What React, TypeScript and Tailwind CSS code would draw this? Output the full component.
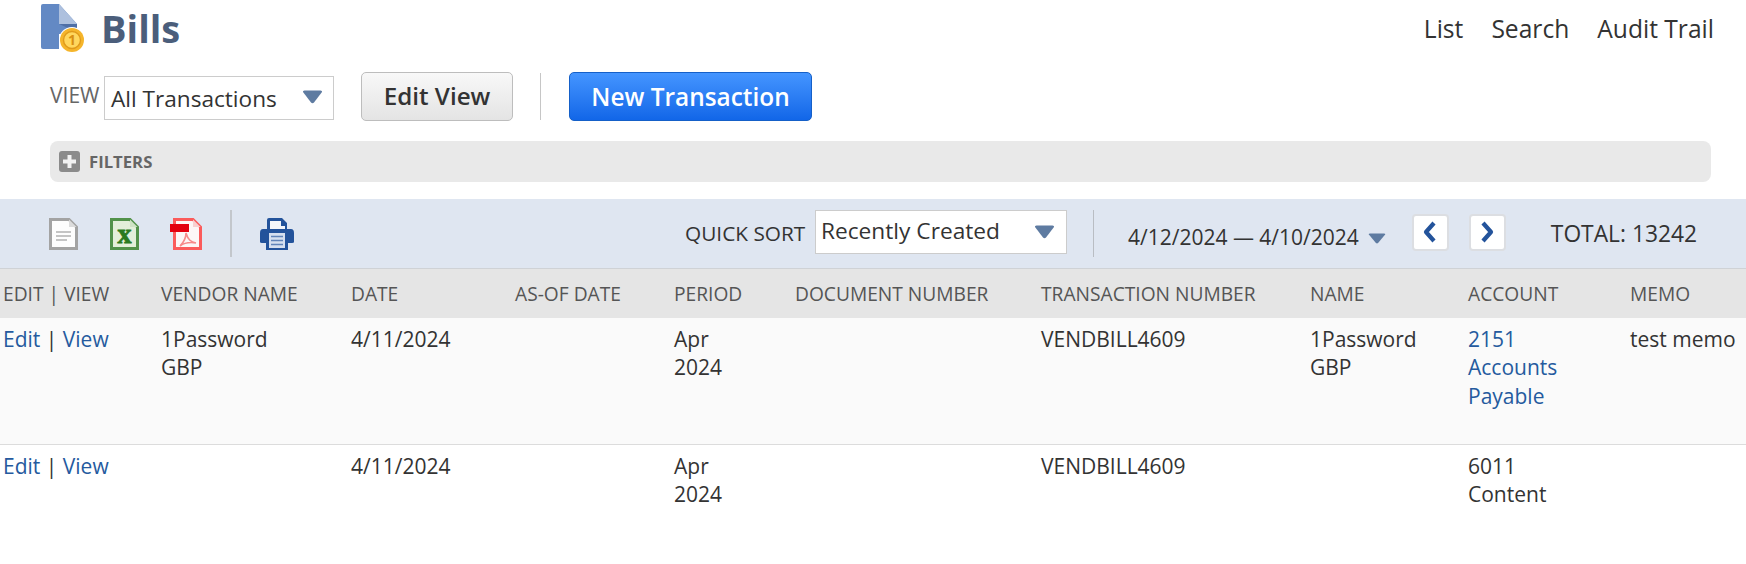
import React from "react";

const Caret = ({ w = 21, h = 14, className = "" }: { w?: number; h?: number; className?: string }) => (
  <svg width={w} height={h} viewBox="0 0 21 14" preserveAspectRatio="none" className={className}>
    <path d="M1 2 Q0.5 0.5 2.5 0.5 H18.5 Q20.5 0.5 20 2 L12 12.5 Q10.5 14 9 12.5 Z" fill="#5e7ba1" />
  </svg>
);

const BillIcon = () => (
  <svg width="44" height="49" viewBox="0 0 44 49" className="shrink-0">
    <path d="M2 0 H18 V45 H2 Q0 45 0 43 V2 Q0 0 2 0 Z" fill="#6389c4" />
    <path d="M18 0 L36 20 V30 H18 Z" fill="#6389c4" />
    <path d="M18 0 L36 20 H18 Z" fill="#adc0de" />
    <path d="M18 20 H36 V28 Z" fill="#4f6fa6" />
    <circle cx="31" cy="36" r="13" fill="#ffffff" />
    <circle cx="31" cy="36" r="12" fill="#f5b52b" />
    <circle cx="31" cy="36" r="8.5" fill="#ffd75e" stroke="#e09a1a" strokeWidth="1.4" />
    <text x="31" y="41" textAnchor="middle" fontSize="14" fontWeight="700" fill="#d98f12" fontFamily="Open Sans, sans-serif">1</text>
  </svg>
);

const PlusIcon = () => (
  <svg width="21" height="21" viewBox="0 0 21 21" className="shrink-0">
    <rect width="21" height="21" rx="3" fill="#8b8b8b" />
    <path d="M8.5 4 H12.5 V8.5 H17 V12.5 H12.5 V17 H8.5 V12.5 H4 V8.5 H8.5 Z" fill="#f2f2f2" />
  </svg>
);

const FileShape = ({ color }: { color: string }) => (
  <>
    <path d="M1.5 1.5 H20 L27.5 9 V30.5 H1.5 Z" fill="#fdfdfd" stroke={color} strokeWidth="3" />
    <path d="M20 1.5 V9 H27.5 Z" fill="#dcdcdc" />
  </>
);

const DocIcon = () => (
  <svg width="29" height="32" viewBox="0 0 29 32">
    <FileShape color="#a3a3a3" />
    <path d="M7 14 H22 M7 18 H22 M7 22 H18" stroke="#c4c4c4" strokeWidth="2" />
  </svg>
);

const ExcelIcon = () => (
  <svg width="29" height="32" viewBox="0 0 29 32">
    <path d="M1.5 1.5 H20 L27.5 9 V30.5 H1.5 Z" fill="#e3efda" stroke="#52924a" strokeWidth="3" />
    <path d="M20 1.5 V9 H27.5 Z" fill="#cfe3c5" />
    <text x="14.5" y="25" textAnchor="middle" fontSize="28" fontWeight="700" fill="#2a7a20" stroke="#2a7a20" strokeWidth="0.8" fontFamily="Liberation Serif, serif">x</text>
  </svg>
);

const PdfIcon = () => (
  <svg width="32" height="32" viewBox="0 0 32 32">
    <path d="M4.5 1.5 H23 L30.5 9 V30.5 H4.5 Z" fill="#fdf6f6" stroke="#fb5b5b" strokeWidth="3" />
    <path d="M23 1.5 V9 H30.5 Z" fill="#f8d0d0" />
    <rect x="0" y="6" width="19" height="8" fill="#e3000f" />
    <path d="M16 15 C18 22 21 24 26 25 C20 24 14 25 10 28 C14 24 16 20 16 15 Z" fill="none" stroke="#f78a8a" strokeWidth="1.6" />
  </svg>
);

const PrinterIcon = () => (
  <svg width="34" height="32" viewBox="0 0 34 32">
    <path d="M9 0 H22 L27 5 V11 H31 Q34 11 34 15 V24 Q34 25 32 25 H28 V32 H6 V25 H2 Q0 25 0 24 V15 Q0 11 3 11 H7 V2 Q7 0 9 0 Z" fill="#23539b" />
    <path d="M10 3 H21 V8 H25 V11 H10 Z" fill="#f4f6fa" />
    <rect x="9" y="15" width="16" height="15" fill="#d5dfef" />
    <path d="M11 18.5 H23 M11 22.5 H23 M11 26.5 H23" stroke="#23539b" strokeWidth="1.3" opacity="0.65" />
  </svg>
);

const Chevron = ({ left }: { left?: boolean }) => (
  <svg width="14" height="24" viewBox="0 0 14 24">
    <path d={left ? "M11 3 L3 12 L11 21" : "M3 3 L11 12 L3 21"} fill="none" stroke="#23539b" strokeWidth="4.2" strokeLinejoin="round" />
  </svg>
);

const NavBtn = ({ left }: { left?: boolean }) => (
  <div className="w-[37px] h-[37px] flex items-center justify-center rounded-[4px] bg-white border-2 border-[#dcdee2]">
    <Chevron left={left} />
  </div>
);

const cols = "grid grid-cols-[158px_190px_164px_159px_121px_246px_269px_158px_162px_113px] pl-[3px]";

const headers = ["EDIT | VIEW", "VENDOR NAME", "DATE", "AS-OF DATE", "PERIOD", "DOCUMENT NUMBER", "TRANSACTION NUMBER", "NAME", "ACCOUNT", "MEMO"];

const Actions = () => (
  <div>
    <a className="text-[#255a9e]">Edit</a> | <a className="text-[#255a9e]">View</a>
  </div>
);

export default function App() {
  return (
    <div className="w-[1746px] h-[564px] bg-white overflow-hidden font-['Open_Sans',sans-serif] text-[#333]">
      <div className="h-[72px] flex items-start pl-[41px] pr-[32px] pt-[4px]">
        <BillIcon />
        <h1 className="ml-[16px] text-[38px] leading-[48px] font-bold text-[#4b5e7b]">Bills</h1>
        <nav className="ml-auto flex gap-[28px] text-[24.6px] leading-[50px] text-[#333]">
          <span>List</span>
          <span>Search</span>
          <span>Audit Trail</span>
        </nav>
      </div>

      <div className="h-[49px] flex items-center pl-[50px]">
        <span className="w-[54px] text-[21px] text-[#666] -mt-[2px]">VIEW</span>
        <div className="w-[230px] h-[44px] mt-[3px] border border-[#ccc] bg-white flex items-center pl-[6px] pr-[10px] justify-between text-[22.6px] text-[#333]">
          <span className="mt-[1px]">All Transactions</span>
          <Caret className="-mt-[3px]" />
        </div>
        <button className="ml-[27px] w-[152px] h-[49px] rounded-[5px] border border-[#bdbdbd] bg-linear-to-b from-[#f8f8f8] to-[#e4e4e4] text-[24.2px] font-semibold text-[#333]">Edit View</button>
        <div className="ml-[27px] w-[1px] h-[47px] bg-[#c6c6c6]" />
        <button className="ml-[28px] w-[243px] h-[49px] pt-[1px] rounded-[5px] border border-[#1560c8] bg-linear-to-b from-[#4495ff] to-[#1166e8] text-[24.4px] font-semibold text-white">New Transaction</button>
      </div>

      <div className="mt-[20px] mr-[35px] ml-[50px] h-[41px] rounded-[8px] bg-[#e9e9e9] flex items-center pl-[9px]">
        <PlusIcon />
        <span className="ml-[9px] text-[16.7px] font-bold text-[#666]">FILTERS</span>
      </div>

      <div className="mt-[17px] h-[70px] bg-[#dfe6f1] border-b border-[#cfd2d6] flex items-center text-[#333]">
        <div className="ml-[49px]"><DocIcon /></div>
        <div className="ml-[32px]"><ExcelIcon /></div>
        <div className="ml-[31px]"><PdfIcon /></div>
        <div className="ml-[28px] w-[2px] h-[47px] bg-[#c3c7cc]" />
        <div className="ml-[28px]"><PrinterIcon /></div>
        <span className="ml-[391px] w-[130px] text-[20.8px] whitespace-nowrap">QUICK SORT</span>
        <div className="w-[252px] h-[44px] border border-[#ccc] bg-white flex items-center pl-[5px] pr-[11px] justify-between text-[22.7px] -mt-[4px]">
          <span>Recently Created</span>
          <Caret />
        </div>
        <div className="ml-[26px] w-[1px] h-[47px] bg-[#b9bdc3]" />
        <span className="ml-[34px] text-[21px] whitespace-nowrap mt-[9px]">4/12/2024 — 4/10/2024</span>
        <Caret w={18} h={11} className="ml-[9px] mt-[10px]" />
        <div className="ml-[26px] -mt-[3px]"><NavBtn left /></div>
        <div className="ml-[20px] -mt-[3px]"><NavBtn /></div>
        <span className="ml-[45px] text-[22.8px] whitespace-nowrap mt-[2px]">TOTAL: 13242</span>
      </div>

      <div className={`${cols} h-[49px] pt-[1px] items-center bg-[#e5e5e5] text-[19.2px] text-[#555] whitespace-nowrap`}>
        {headers.map((h) => <div key={h}>{h}</div>)}
      </div>

      <div className={`${cols} h-[127px] pt-[7px] bg-[#fafafa] border-b border-[#dcdcdc] text-[21px] leading-[28.4px]`}>
        <Actions />
        <div>1Password<br />GBP</div>
        <div>4/11/2024</div>
        <div />
        <div>Apr<br />2024</div>
        <div />
        <div>VENDBILL4609</div>
        <div>1Password<br />GBP</div>
        <div className="text-[#255a9e]">2151<br />Accounts<br />Payable</div>
        <div className="whitespace-nowrap">test memo</div>
      </div>

      <div className={`${cols} pt-[7px] text-[21px] leading-[28.4px]`}>
        <Actions />
        <div />
        <div>4/11/2024</div>
        <div />
        <div>Apr<br />2024</div>
        <div />
        <div>VENDBILL4609</div>
        <div />
        <div>6011<br />Content</div>
        <div />
      </div>
    </div>
  );
}
